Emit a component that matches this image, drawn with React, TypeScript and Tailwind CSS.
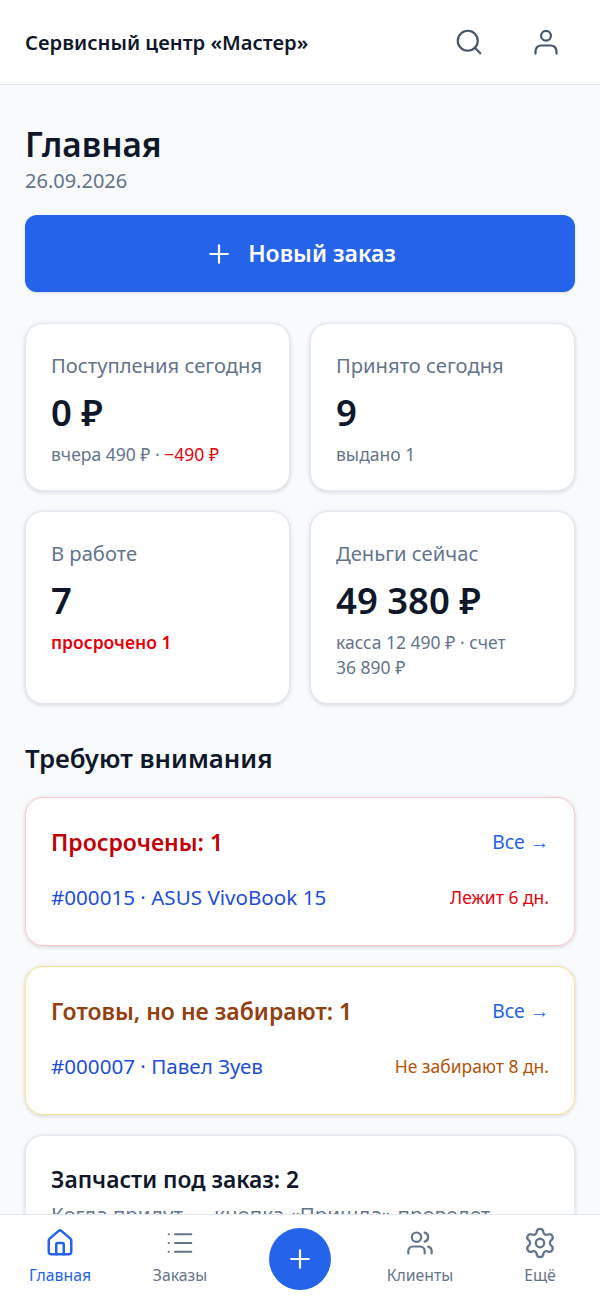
import { House, List, Plus, Search, Settings, Users } from "lucide-react";
import type { ReactNode } from "react";

const cardShadow = "shadow-[0_1px_4px_rgba(15,23,42,0.16)]";

function StatCard({ label, value, children }: { label: string; value: string; children: ReactNode }) {
  return (
    <div className={`rounded-[18px] border border-[#e2e8f0] bg-white px-[25px] pt-[25px] pb-[23px] ${cardShadow}`}>
      <div className="text-[20.2px] leading-[32px] whitespace-nowrap text-[#64748b]">{label}</div>
      <div className="mt-[11px] text-[36.5px] leading-[40px] font-semibold text-[#0f172a]">{value}</div>
      <div className="mt-[10px] text-[17.5px] leading-[25px] text-[#64748b]">{children}</div>
    </div>
  );
}

function AlertCard({ title, titleColor, border, text, note, noteColor }: {
  title: string;
  titleColor: string;
  border: string;
  text: string;
  note: string;
  noteColor: string;
}) {
  return (
    <div className={`rounded-[18px] border bg-white px-[25px] pt-[25px] pb-[33px] ${cardShadow} ${border}`}>
      <div className="flex items-center justify-between">
        <h3 className={`text-[23px] leading-[38px] font-semibold ${titleColor}`}>{title}</h3>
        <span className="text-[19.3px] text-[#2563eb]">Все →</span>
      </div>
      <div className="mt-[21px] flex items-center justify-between">
        <span className="text-[20.6px] leading-[30px] text-[#1d4ed8]">{text}</span>
        <span className={`text-[17.5px] ${noteColor}`}>{note}</span>
      </div>
    </div>
  );
}

function NavItem({ label, active, children }: { label: string; active?: boolean; children: ReactNode }) {
  return (
    <div className={`flex w-[120px] flex-col items-center gap-[6px] ${active ? "text-[#2563eb]" : "text-[#64748b]"}`}>
      <div className="flex h-[30px] items-center justify-center">{children}</div>
      <span className="text-[15.8px] leading-[22px]">{label}</span>
    </div>
  );
}

function UserIcon() {
  return (
    <svg width="30" height="30" viewBox="0 0 30 30" fill="none" stroke="currentColor" strokeWidth="2.2" strokeLinecap="round">
      <circle cx="15" cy="8.8" r="4.9" />
      <path d="M4.5 26.6v-2.6a5.5 5.5 0 0 1 5.5-5.5h10a5.5 5.5 0 0 1 5.5 5.5v2.6" />
    </svg>
  );
}

export default function App() {
  return (
    <div className="flex h-[1298px] flex-col overflow-hidden bg-[#f8fafc] font-['Noto_Sans',sans-serif]">
      <header className="flex h-[85px] shrink-0 items-center justify-between border-b border-[#e2e8f0] bg-white pr-[39px] pl-[25px]">
        <span className="text-[20.2px] font-semibold text-[#0f172a]">Сервисный центр «Мастер»</span>
        <div className="flex items-center gap-[47px] text-[#475569]">
          <Search size={30} strokeWidth={1.75} />
          <UserIcon />
        </div>
      </header>

      <main className="flex-1 overflow-hidden px-[25px] pt-[36px]">
        <h1 className="text-[33.3px] leading-[46px] font-semibold text-[#0f172a]">Главная</h1>
        <p className="text-[20px] leading-[28px] text-[#64748b]">26.09.2026</p>

        <button className="mt-[20px] flex h-[77px] w-full items-center justify-center gap-[14px] rounded-xl bg-[#2563eb] text-[23px] font-semibold text-white shadow-sm">
          <Plus size={30} strokeWidth={1.75} />
          Новый заказ
        </button>

        <div className="mt-[31px] grid grid-cols-2 gap-[20px]">
          <StatCard label="Поступления сегодня" value="0 ₽">
            вчера 490 ₽ · <span className="text-[#e7000b]">−490 ₽</span>
          </StatCard>
          <StatCard label="Принято сегодня" value="9">
            выдано 1
          </StatCard>
          <StatCard label="В работе" value="7">
            <span className="font-semibold text-[#e7000b]">просрочено 1</span>
          </StatCard>
          <StatCard label="Деньги сейчас" value="49 380 ₽">
            касса 12 490 ₽ · счет 36{"\u00a0"}890{"\u00a0"}₽
          </StatCard>
        </div>

        <h2 className="mt-[36px] text-[25.8px] leading-[36px] font-semibold text-[#0f172a]">Требуют внимания</h2>

        <div className="mt-[21px] flex flex-col gap-[20px]">
          <AlertCard
            title="Просрочены: 1"
            titleColor="text-[#c10007]"
            border="border-[#ffc9c9]"
            text="#000015 · ASUS VivoBook 15"
            note="Лежит 6 дн."
            noteColor="text-[#e7000b]"
          />
          <AlertCard
            title="Готовы, но не забирают: 1"
            titleColor="text-[#92400e]"
            border="border-[#fde68a]"
            text="#000007 · Павел Зуев"
            note="Не забирают 8 дн."
            noteColor="text-[#b45309]"
          />
          <div className={`rounded-[18px] border border-[#e2e8f0] bg-white px-[25px] pt-[25px] pb-[25px] ${cardShadow}`}>
            <h3 className="text-[22.8px] leading-[38px] font-semibold text-[#0f172a]">Запчасти под заказ: 2</h3>
            <div className="flex items-center justify-between">
              <span className="text-[20.5px] leading-[30px] text-[#64748b]">Когда придут — кнопка «Пришла» проведет</span>
              <span className="text-[19.3px] text-[#2563eb]">→</span>
            </div>
          </div>
        </div>
      </main>

      <nav className="flex h-[84px] shrink-0 items-start justify-between border-t border-[#e2e8f0] bg-white pt-[13px]">
        <NavItem label="Главная" active>
          <House size={30} strokeWidth={2} />
        </NavItem>
        <NavItem label="Заказы">
          <List size={30} strokeWidth={1.75} />
        </NavItem>
        <div className="flex w-[120px] justify-center">
          <div className="flex h-[62px] w-[62px] items-center justify-center rounded-full bg-[#2563eb] text-white">
            <Plus size={30} strokeWidth={1.75} />
          </div>
        </div>
        <NavItem label="Клиенты">
          <Users size={28} strokeWidth={1.9} />
        </NavItem>
        <NavItem label="Ещё">
          <Settings size={34} strokeWidth={1.6} />
        </NavItem>
      </nav>
    </div>
  );
}
